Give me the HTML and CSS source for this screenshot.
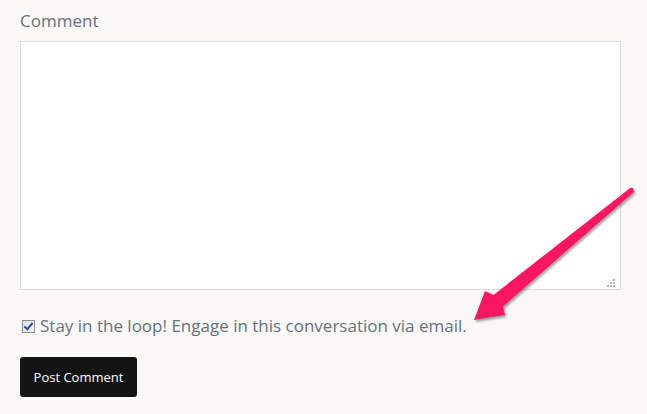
FILE: index.html
```html
<!DOCTYPE html>
<html>
<head>
<meta charset="utf-8">
<link rel="stylesheet" href="styles.css">
</head>
<body>
<form class="comment-form">
  <label class="field-label" for="comment">Comment</label>
  <div class="box-wrap">
    <textarea id="comment" class="comment-box"></textarea>
    <span class="grip">
      <i class="d" style="left:6px;top:0"></i>
      <i class="d" style="left:3px;top:3px"></i><i class="d" style="left:6px;top:3px"></i>
      <i class="d" style="left:0;top:6px"></i><i class="d" style="left:3px;top:6px"></i><i class="d" style="left:6px;top:6px"></i>
    </span>
  </div>
  <label class="subscribe">
    <input type="checkbox" class="subscribe-check" checked>
    <span>Stay in the loop! Engage in this conversation via email.</span>
  </label>
  <button type="button" class="submit-btn">Post Comment</button>
</form>
<svg class="callout-arrow" width="647" height="414" viewBox="0 0 647 414">
  <defs>
    <filter id="sh" x="-20%" y="-20%" width="140%" height="140%">
      <feDropShadow dx="1.5" dy="2" stdDeviation="1.2" flood-color="#2a2a2a" flood-opacity="0.45"/>
    </filter>
  </defs>
  <path filter="url(#sh)" fill="#fb1460" d="M474 320 L485 291 L493.5 295 L630.2 187.9 Q634.2 187.4 633.8 192.1 L503 306.5 L505 315 Z"/>
</svg>
</body>
</html>
```
FILE: styles.css
```css
html, body {
  margin: 0;
  padding: 0;
  background: #f9f8f6;
}
body {
  font-family: "Open Sans", "Liberation Sans", sans-serif;
  width: 647px;
  height: 414px;
  overflow: hidden;
  position: relative;
}
.comment-form {
  display: flex;
  flex-direction: column;
  align-items: flex-start;
  padding: 9px 20px 0 20px;
}
.field-label {
  font-size: 17px;
  line-height: 24px;
  color: #66717f;
  margin-bottom: 8px;
}
.box-wrap {
  position: relative;
}
.comment-box {
  box-sizing: border-box;
  width: 601px;
  height: 249px;
  margin: 0;
  border: 1px solid #dcdcdc;
  background: #fff;
  resize: none;
  display: block;
  outline: none;
}
.grip {
  position: absolute;
  right: 6px;
  bottom: 3px;
  width: 8px;
  height: 8px;
}
.grip .d {
  position: absolute;
  width: 2px;
  height: 2px;
  background: #b4b4b4;
}
.subscribe {
  display: flex;
  align-items: center;
  margin-top: 25px;
  font-size: 17px;
  line-height: 22px;
  color: #66717f;
}
.subscribe-check {
  appearance: none;
  -webkit-appearance: none;
  box-sizing: border-box;
  width: 13px;
  height: 13px;
  margin: 0 5px 0 2px;
  border: 1px solid #8e8f8f;
  background: linear-gradient(135deg, #dcdcdc, #ffffff);
  position: relative;
}
.subscribe-check:checked::after {
  content: "";
  position: absolute;
  left: 3px;
  top: 0px;
  width: 3px;
  height: 7px;
  border: solid #2b48a8;
  border-width: 0 2px 2px 0;
  transform: rotate(40deg);
}
.submit-btn {
  margin-top: 20px;
  background: #141414;
  color: #fff;
  border: 0;
  border-radius: 3px;
  width: 117px;
  height: 40px;
  font-family: "Open Sans", "Liberation Sans", sans-serif;
  font-size: 13px;
  padding: 0;
}
.callout-arrow {
  position: absolute;
  left: 0;
  top: 0;
  pointer-events: none;
}
```
